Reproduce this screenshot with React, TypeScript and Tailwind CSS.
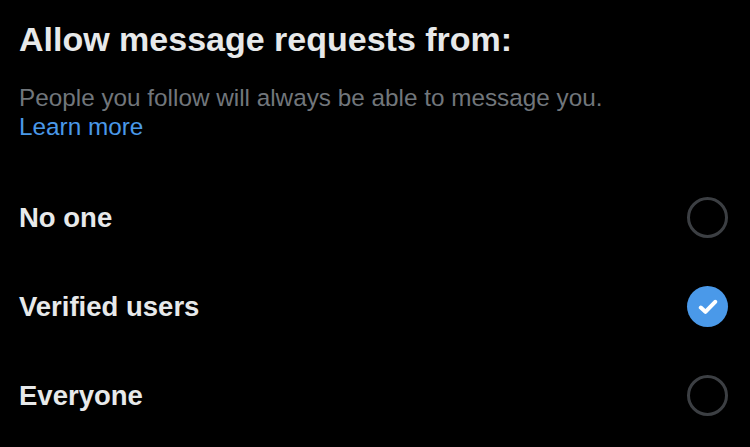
import React, { useState } from 'react'

const OPTIONS = ['No one', 'Verified users', 'Everyone']

const Radio: React.FC<{ checked: boolean }> = ({ checked }) =>
  checked ? (
    <span className="flex h-[41px] w-[41px] items-center justify-center rounded-full bg-[#4a99e9]">
      <svg width="20" height="16" viewBox="0 0 20 16" fill="none">
        <path d="M2.8 8.6 L7.4 12.8 L17.2 2.8" stroke="#fff" strokeWidth="4" strokeLinecap="round" strokeLinejoin="round" />
      </svg>
    </span>
  ) : (
    <span className="block h-[41px] w-[41px] rounded-full border-[3px] border-[#3c3f43]" />
  )

const App: React.FC = () => {
  const [selected, setSelected] = useState('Verified users')

  return (
    <div
      className="min-h-[447px] w-[750px] bg-black pl-[19px] pr-[22px] pt-[19px]"
      style={{ fontFamily: '"Liberation Sans", Arial, sans-serif' }}
    >
      <h1 className="text-[34px] font-bold leading-[40px] text-[#e7e9ea]">Allow message requests from:</h1>

      <p className="mt-[24px] text-[24.3px] leading-[29px] text-[#71767b]">
        People you follow will always be able to message you.
        <br />
        <a href="#" className="text-[#4a99e9]">Learn more</a>
      </p>

      <div className="mt-[32px]">
        {OPTIONS.map(o => (
          <button
            key={o}
            onClick={() => setSelected(o)}
            className="flex h-[89px] w-full items-center justify-between text-left"
          >
            <span className="text-[27.5px] font-bold leading-[32px] text-[#e7e9ea]">{o}</span>
            <Radio checked={selected === o} />
          </button>
        ))}
      </div>
    </div>
  )
}

export default App
